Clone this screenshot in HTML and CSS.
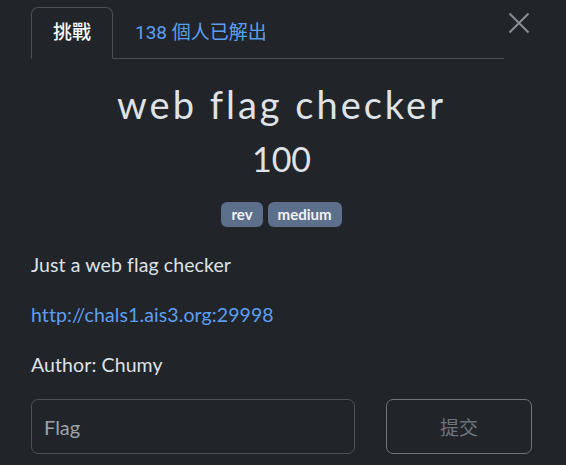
FILE: index.html
```html
<!DOCTYPE html>
<html lang="zh-Hant">
<head>
<meta charset="utf-8">
<title>web flag checker</title>
<link rel="stylesheet" href="styles.css">
</head>
<body>
<div class="modal">
  <div class="header">
    <ul class="tabs">
      <li class="tab active">挑戰</li>
      <li class="tab solves">138 個人已解出</li>
    </ul>
    <button class="close" aria-label="Close">
      <svg width="22" height="22" viewBox="0 0 22 22"><path d="M1.5 1.5 L20.5 20.5 M20.5 1.5 L1.5 20.5" stroke="#8a8d91" stroke-width="2" fill="none"/></svg>
    </button>
  </div>
  <div class="body">
    <h2 class="title">web flag checker</h2>
    <h3 class="value">100</h3>
    <div class="tags">
      <span class="tag">rev</span>
      <span class="tag">medium</span>
    </div>
    <div class="desc">
      <p>Just a web flag checker</p>
      <p><a href="#">http://chals1.ais3.org:29998</a></p>
      <p>Author: Chumy</p>
    </div>
    <div class="submit-row">
      <input class="flag-input" type="text" placeholder="Flag">
      <button class="submit-btn">提交</button>
    </div>
  </div>
</div>
</body>
</html>
```
FILE: styles.css
```css
html, body {
  margin: 0;
  padding: 0;
  background: #212529;
}
body {
  font-family: Lato, "Noto Sans CJK TC", sans-serif;
  color: #dee2e6;
  width: 566px;
  height: 465px;
  overflow: hidden;
}
.modal {
  padding: 7px 34px 0 31px;
}
.header {
  display: flex;
  align-items: flex-start;
}
.tabs {
  list-style: none;
  margin: 0;
  padding: 0;
  display: flex;
  width: 473px;
  border-bottom: 1px solid #495057;
}
.tab {
  font-family: Roboto, "Noto Sans CJK TC", sans-serif;
  font-size: 19px;
  height: 50px;
  line-height: 50px;
  padding: 0 21px;
  border: 1px solid transparent;
  border-radius: 7px 7px 0 0;
  margin-bottom: -1px;
}
.tab.active {
  color: #f8f9fa;
  font-weight: 500;
  border-color: #495057;
  border-bottom-color: #212529;
}
.tab.solves {
  color: #5c9ff0;
  padding-left: 21px;
}
.close {
  background: none;
  border: 0;
  padding: 0;
  margin: 5px 0 0 4px;
  width: 22px;
  height: 22px;
  cursor: pointer;
}
.close svg {
  display: block;
}
.body {
  display: flex;
  flex-direction: column;
}
.title {
  margin: 22px 0 0;
  text-align: center;
  font-weight: 400;
  font-size: 38px;
  line-height: 46px;
  color: #dfe2e6;
  letter-spacing: 3px;
}
.value {
  margin: 12px 0 0;
  text-align: center;
  font-weight: 400;
  font-size: 34px;
  line-height: 40px;
  color: #dfe2e6;
}
.tags {
  display: flex;
  justify-content: center;
  gap: 5px;
  margin-top: 23px;
}
.tag {
  background: #5c6f8b;
  color: #f1f3f5;
  font-weight: 700;
  font-size: 15px;
  line-height: 25px;
  height: 25px;
  padding: 0 10px;
  border-radius: 6px;
}
.desc {
  margin-top: 23px;
}
.desc p {
  margin: 0 0 21px;
  font-size: 19.5px;
  line-height: 29px;
  letter-spacing: 0.1px;
}
.desc a {
  color: #5c9ff0;
  text-decoration: none;
}
.submit-row {
  display: flex;
  gap: 31px;
  margin-top: -1px;
}
.flag-input {
  flex: 1;
  height: 55px;
  box-sizing: border-box;
  background: #212529;
  border: 1px solid #4b5158;
  border-radius: 7px;
  padding: 0 12px;
  font-family: Lato, sans-serif;
  font-size: 20px;
  color: #dee2e6;
  outline: none;
}
.flag-input::placeholder {
  color: #9ea3a8;
}
.submit-btn {
  width: 146px;
  height: 55px;
  box-sizing: border-box;
  background: transparent;
  border: 1px solid #6c757d;
  border-radius: 7px;
  font-family: "Noto Sans CJK TC", sans-serif;
  font-size: 19px;
  color: #6c757d;
}
```
